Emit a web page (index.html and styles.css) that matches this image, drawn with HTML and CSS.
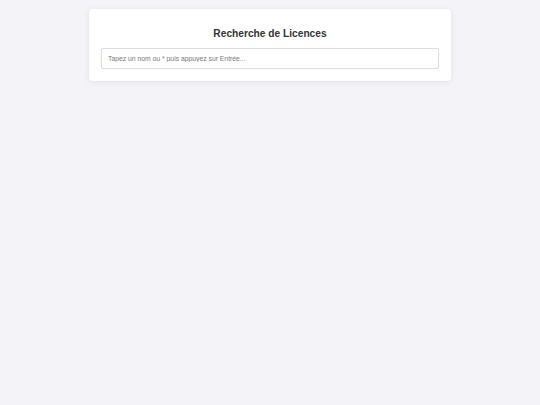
FILE: index.html
```html
<!DOCTYPE html>
<html lang="fr">
<head>
<meta charset="utf-8">
<title>Recherche de Licences</title>
<link rel="stylesheet" href="styles.css">
</head>
<body>
<div class="card">
  <h1 class="title">Recherche de Licences</h1>
  <input class="search" type="text" placeholder="Tapez un nom ou * puis appuyez sur Entrée...">
</div>
</body>
</html>
```
FILE: styles.css
```css
html, body {
  margin: 0;
  padding: 0;
}
body {
  background: #f4f4f8;
  font-family: "Liberation Sans", Arial, sans-serif;
  min-height: 405px;
  padding-top: 9px;
  box-sizing: border-box;
}
.card {
  width: 362px;
  margin: 0 auto;
  background: #ffffff;
  border-radius: 4px;
  box-shadow: 0 1px 6px rgba(0, 0, 0, 0.08);
  padding: 12px 12px 12px 12px;
  box-sizing: border-box;
}
.title {
  margin: 6px 0 7px 0;
  text-align: center;
  font-size: 10.2px;
  line-height: 14px;
  font-weight: bold;
  color: #333333;
}
.search {
  display: block;
  width: 100%;
  box-sizing: border-box;
  height: 21px;
  border: 1px solid #dcdcdc;
  border-radius: 2px;
  padding: 0 6px;
  font-family: "Liberation Sans", Arial, sans-serif;
  font-size: 6.8px;
  color: #333;
  outline: none;
}
.search::placeholder {
  color: #7a7a7a;
}
```
